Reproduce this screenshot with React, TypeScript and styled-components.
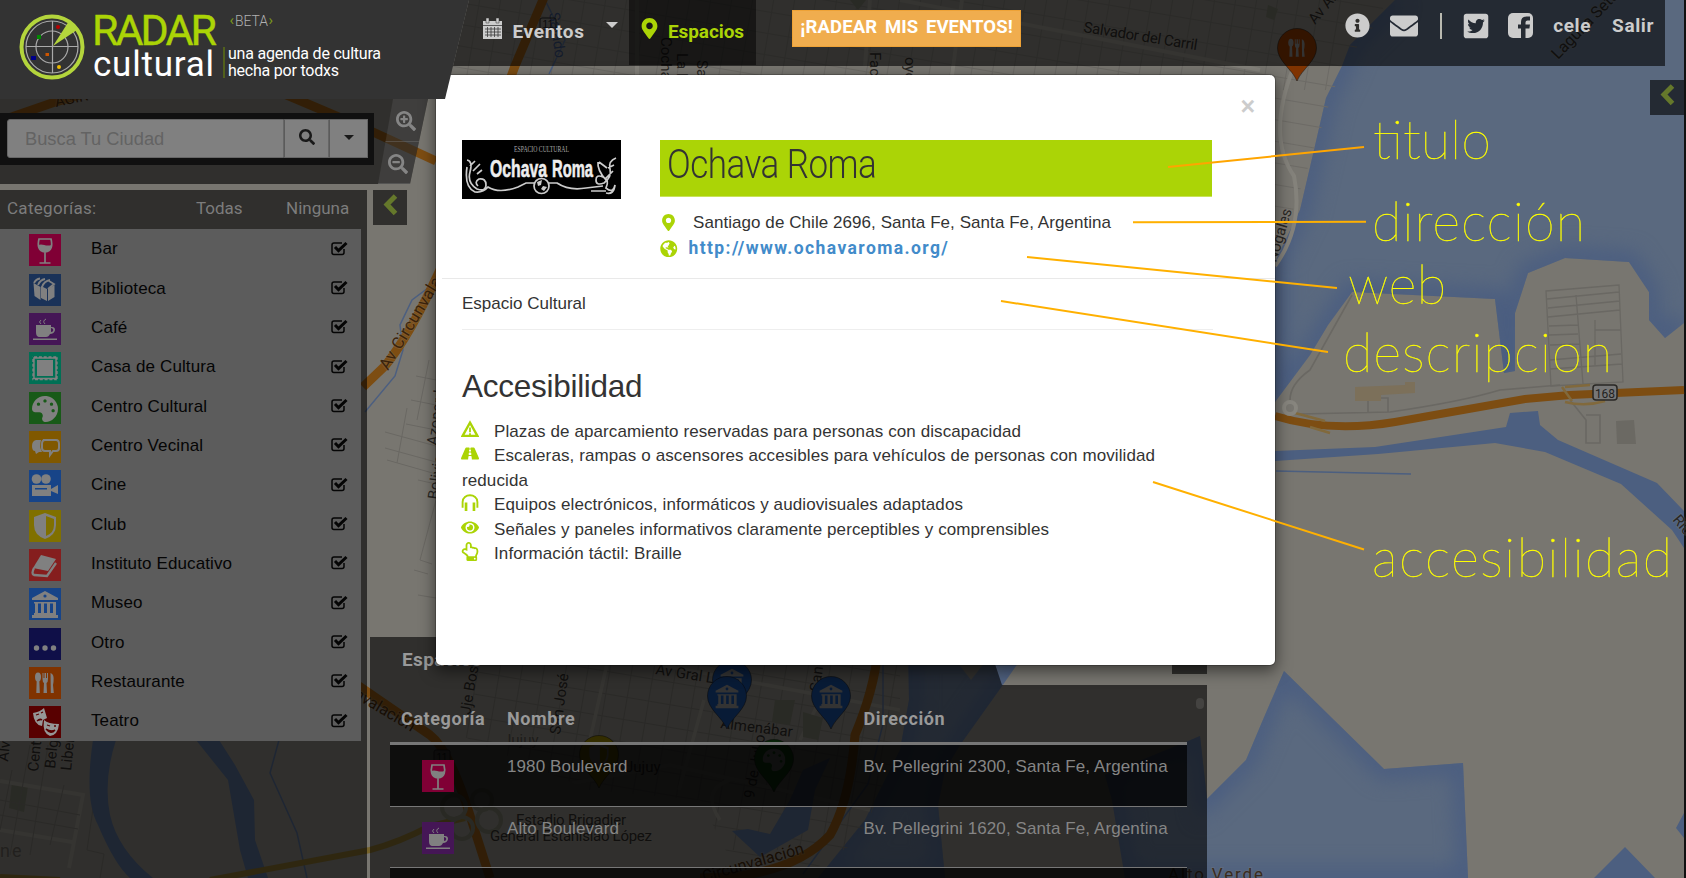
import React from "react";
import styled, { createGlobalStyle } from "styled-components";
import {
  FaInfoCircle, FaEnvelope, FaTwitterSquare, FaMapMarkerAlt, FaSearch, FaSearchPlus,
  FaSearchMinus, FaPalette, FaTheaterMasks, FaGlobeAmericas, FaRoad, FaEye, FaRegHandPointUp,
} from "react-icons/fa";

const LIME = "#abd406";
const SANS = '"Liberation Sans", Arial, sans-serif';
const TECH = 'Roboto, "Liberation Sans", sans-serif';
const SHADE = "rgba(0, 0, 0, 0.6)";

const Global = createGlobalStyle`
  * { box-sizing: border-box; }
  body { margin: 0; background: #151515; font-family: ${SANS}; }
`;

const Screen = styled.main`
  display: grid;
  grid-template: 878px / 1686px;
  width: 1686px;
  height: 878px;
  overflow: hidden;
  font-size: 17px;
  & > * { grid-area: 1 / 1; }
`;

const Layer = styled.svg`
  display: block;
  width: 1686px;
  height: 878px;
`;

const NoteLayer = styled(Layer)`
  position: relative;
  z-index: 6;
  pointer-events: none;
`;

/* ---------- top bar ---------- */

const TopBar = styled.header`
  display: flex;
  justify-content: space-between;
  width: 1220px;
  height: 66px;
  margin-left: 445px;
  background: ${SHADE};
  clip-path: polygon(24px 0, 100% 0, 100% 100%, 8px 100%);
  font-family: ${TECH};
`;

const NavGroup = styled.nav`
  display: flex;
  align-items: flex-start;
`;

const NavItem = styled.a<{ $active?: boolean; $width: number; $pad: number; $gap: number; $spacing: number }>`
  display: flex;
  flex: none;
  gap: ${(p) => p.$gap}px;
  width: ${(p) => p.$width}px;
  height: 65px;
  padding: 18px 0 0 ${(p) => p.$pad}px;
  background: ${(p) => (p.$active ? "rgba(0,0,0,.5)" : "transparent")};
  color: ${(p) => (p.$active ? LIME : "#ccc")};
  font-size: 19px;
  font-weight: 700;
  line-height: 27px;
  letter-spacing: ${(p) => p.$spacing}px;
  svg { flex: none; }
`;

const Caret = styled.span<{ $size: number; $color: string }>`
  flex: none;
  width: 0;
  height: 0;
  border: ${(p) => p.$size}px solid transparent;
  border-top-color: ${(p) => p.$color};
  border-bottom: 0;
`;

const NavCaret = styled(Caret)`
  margin: 4px 0 0 12px;
`;

const PublishButton = styled.button`
  width: 229px;
  height: 37px;
  margin: 10px 0 0 36px;
  padding: 0 0 3px;
  border: 1px solid #eea236;
  background: #f0ad4e;
  color: #fff;
  font: 700 18.5px/26px ${TECH};
  letter-spacing: 0.1px;
  word-spacing: 3px;
  white-space: nowrap;
`;

const Tools = styled.div`
  display: flex;
  align-items: center;
  height: 51px;
  margin-right: 11px;
  color: #ccc;
  font-size: 19px;
  font-weight: 700;
  letter-spacing: 0.6px;
`;

const Spacer = styled.i<{ $w: number }>`
  width: ${(p) => p.$w}px;
`;

const Bar = styled.i`
  width: 2px;
  height: 26px;
  background: #b9b9b0;
`;

/* ---------- left column ---------- */

const LeftColumn = styled.aside`
  display: flex;
  flex-direction: column;
  width: 469px;
  height: 878px;
`;

const Brand = styled.div`
  position: relative;
  z-index: 5;
  flex: none;
  height: 99px;
  background: #333;
  clip-path: polygon(0 0, 100% 0, 445px 100%, 0 100%);
`;

const SearchArea = styled.div`
  display: flex;
  flex: none;
  justify-content: space-between;
  width: 428px;
  height: 85px;
  margin-bottom: 6px;
  background: ${SHADE};
  clip-path: polygon(0 0, 100% 0, 410px 100%, 0 100%);
`;

const SearchBox = styled.div`
  display: flex;
  width: 374px;
  height: 52px;
  margin-top: 14px;
  padding: 6px 6px 7px 7px;
  background: #101010;
`;

const SearchField = styled.div`
  width: 277px;
  padding: 0 17px;
  border: 1px solid #666;
  border-radius: 3px 0 0 3px;
  background: #808080;
  color: #636363;
  font-size: 18.3px;
  line-height: 38px;
`;

const SearchButton = styled.div<{ $w: number }>`
  display: flex;
  align-items: center;
  justify-content: center;
  width: ${(p) => p.$w}px;
  padding-bottom: 3px;
  border: 1px solid #666;
  border-left-color: #5b5b5b;
  background: #808080;
  color: #191919;
`;

const ZoomControl = styled.div`
  display: flex;
  flex-direction: column;
  width: 50px;
  height: 85px;
  background: rgba(125, 125, 125, 0.2);
  clip-path: polygon(15px 0, 100% 0, 32px 100%, 0 100%);
  color: #858585;
`;

const ZoomStep = styled.div<{ $shift: number }>`
  height: 43px;
  padding: 12px 0 0 ${(p) => p.$shift}px;
  border-bottom: 1px solid #77777766;
`;

const CategoryArea = styled.div`
  display: flex;
  flex: 1;
  gap: 6px;
  align-items: flex-start;
`;

const CategoryPanel = styled.section`
  width: 367px;
  height: 100%;
  background: ${SHADE};
`;

const CategoryHead = styled.div`
  display: flex;
  height: 39px;
  padding: 6px 0 0 7px;
  color: #7c7c7c;
  font: 400 17px/24px ${TECH};
  span:nth-child(1) { width: 189px; letter-spacing: 0.3px; }
  span:nth-child(2) { width: 90px; }
`;

const CategoryList = styled.ul`
  width: 361px;
  height: 512px;
  margin: 0;
  padding: 0;
  background: #5c5c5c;
  list-style: none;
`;

const CategoryRow = styled.li`
  display: flex;
  align-items: center;
  height: 39.35px;
  padding: 3px 13px 0 29px;
  color: #050505;
  letter-spacing: 0.12px;
`;

const CategoryName = styled.span`
  flex: 1;
  padding: 0 0 2px 30px;
`;

const Tile = styled.span<{ $bg: string }>`
  display: block;
  flex: none;
  width: 32px;
  height: 32px;
  background: ${(p) => p.$bg};
  svg { display: block; }
`;

const PanelToggle = styled.div`
  display: flex;
  justify-content: center;
  width: 34px;
  height: 35px;
  padding-top: 4px;
  background: ${SHADE};
`;

const RightToggle = styled(PanelToggle)`
  justify-self: end;
  margin: 80px 2px 0 0;
`;

/* ---------- results ---------- */

const Results = styled.section`
  align-self: end;
  display: flex;
  flex-direction: column;
  width: 837px;
  height: 241px;
  margin-left: 370px;
`;

const ResultsTop = styled.div`
  display: flex;
  justify-content: space-between;
  flex: none;
  height: 48px;
`;

const ResultsTab = styled.div`
  width: 632px;
  padding: 12px 32px;
  background: ${SHADE};
  clip-path: polygon(0 0, 616px 0, 100% 100%, 0 100%);
  color: #999;
  font: 700 19px/22px ${TECH};
  letter-spacing: 0.4px;
`;

const Collapse = styled.div`
  width: 35px;
  height: 37px;
  background: ${SHADE};
`;

const ResultsBody = styled.div`
  display: flex;
  flex: 1;
  gap: 9px;
  padding: 0 0 0 20px;
  background: ${SHADE};
  overflow: hidden;
`;

const ScrollThumb = styled.i`
  width: 8px;
  height: 11px;
  margin-top: 13px;
  border-radius: 4px;
  background: #444341;
`;

const Table = styled.div`
  width: 797px;
`;

const TableHead = styled.div`
  display: grid;
  grid-template-columns: 106px 356.5px 1fr;
  height: 60px;
  padding: 22px 0 0 11px;
  border-bottom: 3px solid #777;
  color: #999;
  font: 700 18px/24px ${TECH};
  letter-spacing: 0.6px;
`;

const TableRow = styled.div<{ $dark?: boolean }>`
  display: grid;
  grid-template-columns: 85px 356.5px 1fr;
  height: 61.5px;
  padding: 15px 0 0 32px;
  border-bottom: 1.5px solid #777;
  background: ${(p) => (p.$dark ? "rgba(0,0,0,.7)" : "transparent")};
  color: #858585;
  line-height: 20px;
  letter-spacing: 0.1px;
  span + span { margin-top: -3px; }
`;

/* ---------- dialog ---------- */

const Dialog = styled.section`
  position: relative;
  z-index: 4;
  display: flex;
  flex-direction: column;
  width: 841px;
  height: 592px;
  margin: 74px 0 0 435px;
  border: 1px solid rgba(0, 0, 0, 0.2);
  border-radius: 6px;
  background: #fff;
  background-clip: padding-box;
  box-shadow: 0 5px 15px rgba(0, 0, 0, 0.5);
  color: #333;
`;

const CloseRow = styled.div`
  flex: none;
  height: 65px;
  padding: 17px 20px 0;
  color: #ccc;
  font: 700 25px/28px ${SANS};
  text-align: right;
`;

const DialogHead = styled.div`
  display: flex;
  flex: none;
  gap: 39px;
  height: 139px;
  margin-left: 6px;
  padding: 0 62px 0 20px;
  border-bottom: 1px solid #e9e9e9;
`;

const PlaceInfo = styled.div`
  width: 552px;
`;

const PlaceTitle = styled.h1`
  height: 57px;
  margin: 0 0 13px;
  padding: 0 7px;
  background: ${LIME};
  border-bottom: 1px solid #c8e25a;
  color: #333;
  font: 300 40px/49px ${TECH};
  letter-spacing: -0.6px;
  span { display: inline-block; transform: scaleX(0.875); transform-origin: left; }
`;

const InfoLine = styled.div<{ $gap: number }>`
  display: flex;
  align-items: center;
  gap: ${(p) => p.$gap}px;
  height: 25.5px;
  letter-spacing: 0.06px;
  svg { flex: none; color: ${LIME}; }
`;

const SiteLink = styled.a`
  color: #428bca;
  font: 700 17.5px/22px ${TECH};
  letter-spacing: 1.4px;
`;

const Description = styled.p`
  flex: none;
  height: 51px;
  margin: 0 62px 0 26px;
  padding: 15px 0 0;
  border-bottom: 1px solid #eee;
  line-height: 20px;
`;

const AccessTitle = styled.h2`
  margin: 34px 26px 12px;
  font: 400 31.5px/44px ${SANS};
  letter-spacing: -0.27px;
`;

const AccessList = styled.div`
  width: 760px;
  margin-left: 26px;
  line-height: 24.4px;
  letter-spacing: 0.1px;
`;

const AccessItem = styled.div`
  padding-right: 40px;
  svg { width: 18px; height: 19px; margin: 0 15px 0 -1px; color: ${LIME}; vertical-align: -2px; }
`;

/* ---------- icons ---------- */

const FG = "#808080";

const glyphs: Record<string, React.ReactNode> = {
  bar: <g fill="none" stroke={FG} strokeWidth="1.7"><path d="M10 5h12c1.5 6 1 12-6 13-7-1-7.500-7-6-13zM16 18v11M10.500 29h11" /><path d="M9.500 11c4-2 7 2 13 0 0 4-2 6.500-6.500 7-4-.5-6.500-3-6.500-7z" fill={FG} stroke="none" /></g>,
  books: <g fill={FG}><path d="M4.500 9l7 4v13l-6-4zM12 12l6 3v12l-6-3zM19 15l6.500-4v12l-6.500 4z" /><path d="M5 9q2-4 6-4.500M9 11q2-5 7-6M13 13q2-6 8-7M19 15l6-5-5-3" fill="none" stroke={FG} strokeWidth="1.800" /></g>,
  cafe: <g fill={FG}><path d="M7 12h15v2c6-1 5 7-1 7-1 2-2 3-4 3h-6c-3 0-4-2-4-5zm15 3v4c3 0 3-4 0-4zM4 25.500h24v1.500H4z" /><path d="M12 11q-3-2 0-4M16 11q-3-3 1-5" stroke={FG} fill="none" /></g>,
  stamp: <g><path d="M8 8h16v16H8z" fill={FG} /><path d="M4.500 5.500h23v21.500h-23z" fill="none" stroke={FG} strokeWidth="2.400" /><path d="M3.300 4.300h25.400v23.900H3.300z" fill="none" stroke="#007055" strokeWidth="1.800" strokeDasharray="1.800 3" /></g>,
  talk: <g><path d="M14 9h13q3 0 3 4v4q0 3-3 3h-3l-3 4v-4h-5q-3 0-3-3v-4q0-4 3-4z" fill="none" stroke={FG} strokeWidth="2" /><path d="M12 9H7q-4 1-4 6t3 5l1 3 3-2h3q-3-5-1-12z" fill={FG} /></g>,
  film: <g fill={FG}><circle cx="7.500" cy="9" r="4.800" /><circle cx="17" cy="9" r="4.800" /><path d="M3 15h19v4l7-4v9l-7-3v5H3z" /><path d="M6 18h12v1.500H6z" fill="#174488" /></g>,
  club: <g><path d="M16 3l11 4v8q0 10-11 14Q5 25 5 15V7z" fill={FG} /><path d="M17 6l8 3v6q0 8-8 11z" fill="#807000" /></g>,
  book: <g><path d="M12 6l15 4-8 12L4 19z" fill={FG} /><path d="M5 19q-3 6 0 7l13 1L27 14" fill="none" stroke={FG} strokeWidth="2.300" /></g>,
  museum: <g fill={FG}><path d="M16 3l13 7v2H3v-2zM5 14h22v1.500H5zM6 15h3v10H6zm6 0h3v10h-3zm6 0h3v10h-3zm6 0h3v10h-3zM5 25h22v2H5zM3 27h26v3H3z" /><circle cx="16" cy="8" r="1.600" fill="#174488" /></g>,
  more: <g fill={FG}><circle cx="7.500" cy="20" r="2.700" /><circle cx="16" cy="20" r="2.700" /><circle cx="24.500" cy="20" r="2.700" /></g>,
  food: <g fill={FG}><ellipse cx="9" cy="10" rx="3" ry="4.500" /><path d="M7.700 13h2.600l.5 13h-3.500zM13.500 6h1v5h1V6h1.500v5h1V6h1v6q0 3-1.500 4l.5 10h-3.500l.5-10q-1.500-1-1.500-4zM21.500 6q4 1 3 9l-.5 3 .8 8h-3z" /></g>,
  masks: <g fill="#969696"><path d="M4 7q7-1 11-5l3 10-4 2-1 6Q5 19 4 7z" /><path d="M15 14q4 4 15 4-1 11-9 12-8-3-6-16z" /><path d="M7 9l3-1M12 7l2-1M8 15q3-3 5-1M18 19l3 1M25 20l2 0M17 23q5 3 9 1-4 5-9-1z" fill="#580000" stroke="#580000" strokeWidth="1.300" /></g>,
};

const Glyph = ({ name, size = 32 }: { name: string; size?: number }) => (
  <svg width={size} height={size} viewBox="0 0 32 32">
    {name === "palette"
      ? <g transform="matrix(-1 0 0 1 32 0)"><FaPalette x={3} y={4} size={26} color={FG} /></g>
      : glyphs[name]}
  </svg>
);

const CheckMark = styled.svg`
  flex: none;
  margin-top: -4px;
`;

const Check = () => (
  <CheckMark width="17" height="15" viewBox="0 0 17 15">
    <path d="M13 8v3.500q0 2-2 2H3q-2 0-2-2V4q0-2 2-2h8" fill="none" stroke="#050505" strokeWidth="1.500" />
    <path d="M4 6l3.500 3.700 8-7.700" fill="none" stroke="#050505" strokeWidth="3" />
  </CheckMark>
);

const Calendar = () => (
  <svg width="21" height="22" viewBox="0 0 21 22">
    <path d="M1 3h19v18H1z" fill="#ccc" />
    <path d="M4 0h3v5H4zM14 0h3v5h-3z" fill="#ccc" stroke="#333" strokeWidth=".5" />
    <path d="M1 7.500h19M3 11h16M3 14h16M3 17h16M5.500 9v10M9 9v10M12.500 9v10M16 9v10" stroke="#3b3b3b" strokeWidth=".8" />
  </svg>
);

const Facebook = () => (
  <svg width="25" height="25" viewBox="0 0 25 25">
    <rect width="25" height="25" rx="5" fill="#ccc" />
    <path d="M13 25v-9.500h-3v-4h3V9q0-5.500 5.500-5.500H22v4h-2.500q-2 0-2 2v2H22l-.6 4h-3.900V25z" fill="#262b33" />
  </svg>
);

const Arrow = () => (
  <svg width="17" height="22" viewBox="0 0 17 22">
    <path d="M13.500 2L5 10.500l8.500 9" fill="none" stroke="#65782b" strokeWidth="5" />
  </svg>
);

const Warning = () => (
  <svg viewBox="0 0 17 18"><path d="M8.500 2.500l7 12.500h-14z" fill="none" stroke="currentColor" strokeWidth="2.200" /><path d="M8.500 7v4.500m0 1v2" stroke="currentColor" strokeWidth="1.700" /></svg>
);

const Headphones = () => (
  <svg viewBox="0 0 17 18"><path d="M1.500 14V8.500C1.500 0 15.500 0 15.500 8.500V14" fill="none" stroke="currentColor" strokeWidth="1.800" /><path d="M3.500 9h2.500v8H3.500zM11 9h2.500v8H11z" fill="currentColor" /></svg>
);

const BrandMark = () => (
  <svg width="445" height="99" viewBox="0 0 445 99">
    <circle cx="52" cy="47" r="30.500" fill="#333" stroke="#b4d53c" strokeWidth="4" />
    <g fill="none" stroke="#aaa">
      <circle cx="52" cy="47" r="26" strokeWidth="1.200" />
      <circle cx="52" cy="47" r="16" strokeWidth="1.200" />
      <path d="M26 46.500h52M52.500 21v52" strokeWidth="1.200" />
    </g>
    <path d="M53 46L69 21q5 3 8 9z" fill="#b4d53c" />
    <circle cx="58" cy="27" r="2" fill="#b00" />
    <rect x="37" y="35" width="4" height="4" fill="#080" />
    <rect x="45.500" y="53" width="3.500" height="3" fill="#c50" />
    <rect x="31" y="56" width="5" height="4" fill="#008" />
    <circle cx="59" cy="67" r="2" fill="#eb0" />
    <g fontFamily="Roboto, sans-serif" fill="#fff">
      <text x="92" y="45" fontSize="43" fill={LIME} stroke={LIME} strokeWidth=".4" textLength="125" lengthAdjust="spacing">RADAR</text>
      <text x="93" y="75.500" fontSize="35" textLength="121" lengthAdjust="spacing">cultural</text>
      <text x="228" y="58.500" fontSize="16" textLength="153" lengthAdjust="spacing">una agenda de cultura</text>
      <text x="228" y="75.500" fontSize="16" textLength="111" lengthAdjust="spacing">hecha por todxs</text>
      <text x="235" y="25.500" fontSize="15.500" fontWeight="300" fill="#b0b0b0" textLength="33" lengthAdjust="spacingAndGlyphs">BETA</text>
      <text x="229.500" y="25" fontSize="15" fill="#7c9a1a">‹</text>
      <text x="268.500" y="25" fontSize="15" fill="#7c9a1a">›</text>
    </g>
    <path d="M224 47v31" stroke="#5d7016" strokeWidth="1.500" />
  </svg>
);

const VenueLogo = () => (
  <svg width="159" height="59" viewBox="0 0 159 59">
    <path d="M0 0h159v59H0z" fill="#000" />
    <text x="52" y="11.500" fill="#aaa" fontFamily="Liberation Serif, serif" fontSize="7.500" textLength="55" lengthAdjust="spacingAndGlyphs">ESPACIO CULTURAL</text>
    <g fill="#eee" stroke="#eee" strokeWidth=".6" fontFamily="Liberation Sans, sans-serif" fontWeight="700" fontSize="24">
      <text x="28" y="37" textLength="57" lengthAdjust="spacingAndGlyphs">Ochava</text>
      <text x="90" y="37" textLength="41" lengthAdjust="spacingAndGlyphs">Roma</text>
    </g>
    <g fill="none" stroke="#ccc" strokeWidth="1.700">
      <path d="M5 20q6 1 3 12t7 17q9 3 9-4t-7-6q-5 3-1 7M5 27q-3 20 8 25 8 1 13-5 11 7 30 0l8-4h8M87 43h8q12 8 29 5l17-2M8 26l5-5M15 34l5-4M11 31l7-7" />
      <path d="M154 18q-8 3-6 11t-6 14q-8 3-8-3t7-3 3 11q7 6 9-3-1 10-9 8M136 22q-1 8 8 18M145 28l-8-6M151 31l-7 7M152 25l-6 3M129 51h15" />
      <circle cx="79.500" cy="46" r="7.500" />
    </g>
    <path d="M75 42l5-2-1 5-3 1zM81 46l4 1-3 4-3-2z" fill="#ccc" />
  </svg>
);

/* ---------- map ---------- */

const LAKE = "M1395 0H1684V323L1665 338 1649 320V292L1629 262 1565 258 1528 273 1515 313V371L1504 373 1495 299 1352 292 1328 325 1310 355 1275 402V262L1283 245 1300 210 1314 150 1326 98 1342 66 1350 45Z";
const LAGOON = "M1284 671L1384 769 1463 763 1468 878H1125L1112 800 1105 775 1186 742 1200 736 1207 799 1246 760 1262 722Z";
const RIVER = "M908 640H1034L1002 686 960 745 945 770 938 805 945 878H818L865 820 900 750 909 700Z";

const Pin = ({ x, y, color, glyph }: { x: number; y: number; color: string; glyph: string }) => (
  <g transform={`translate(${x} ${y})`}>
    <path d="M0 32C-5 20-19.500 12-19.500-1a19.500 19.500 0 0 1 39 0C19.500 12 5 20 0 32Z" fill={color} stroke="#111" strokeOpacity=".5" />
    <g transform="translate(-14 -15)"><Glyph name={glyph} size={28} /></g>
  </g>
);

const streets = (x: number, y: number, w: number, h: number, step: number) => {
  let d = "";
  for (let i = 0; i <= w; i += step) d += `M${x + i} ${y}l${-h * 0.17} ${h}`;
  for (let j = 0; j <= h; j += step) d += `M${x - j * 0.17} ${y + j}l${w} ${w * 0.17}`;
  return d;
};

const CityMap = () => (
  <Layer viewBox="0 0 1686 878">
    <defs>
      <filter id="soft" x="-20%" y="-20%" width="140%" height="140%" colorInterpolationFilters="sRGB"><feGaussianBlur stdDeviation="10" /></filter>
      <clipPath id="waters"><path d={LAKE} /><path d={LAGOON} /><path d={RIVER} /></clipPath>
      <clipPath id="town"><path d="M452 0H1395L1342 66 1314 150 1275 262V640H436V66Z" /></clipPath>
      <clipPath id="south"><path d="M385 650L500 637H900V745L860 840 800 878H740L700 800 590 790 470 740 405 700Z" /></clipPath>
    </defs>
    <path d="M0 0h1686v878H0z" fill="#787670" />
    <g fill="#5a697f"><path d={LAKE} /><path d={LAGOON} /><path d={RIVER} /></g>
    <g clipPath="url(#waters)">
      <g fill="none" stroke="#4a5d80" strokeWidth="20" filter="url(#soft)">
        <path d={LAKE.replace("M1395 0H1684V323", "M1395 0L1350 45M1684 323").replace("Z", "L1395 0")} /><path d={LAGOON} /><path d={RIVER} />
      </g>
    </g>
    <path d="M1684 0h2v878h-2z" fill="#111" />
    <path d="M957 662l14 18 14-18z" fill="#787670" />
    <g fill="none" stroke="#6d6b66" clipPath="url(#town)"><path d={streets(470, -190, 920, 280, 21)} /></g>
    <g fill="none" stroke="#84827b" strokeWidth="4">
      <path d="M870 0l-5 66M962 0l-10 75M900 0l360 70M637 0v75M1294 66q-28 70 0 110 10 50-19 90" />
    </g>
    <g fill="none" stroke="#6a6863" clipPath="url(#south)"><path d={streets(500, 540, 420, 310, 22)} /></g>
    <g fill="none" stroke="#85837b" strokeWidth="3.500" clipPath="url(#south)">
      <path d="M607 664l-18 80M580 650l320 60M510 795l160-30 200 45M704 700l-25 90M800 740l30-60M720 820q-20-30 10-40M470 810l30 68" />
    </g>
    <g fill="none" stroke="#6a6863">
      <path d="M429 360l-12 60M436 380l-20-4M436 405l-25-5M436 430l-30-6M385 432l51 14M385 448l51 14M387 460l49 14M407 408l-10 55M418 480l18 4M436 500l-16 60 12 4M414 570l14 4M418 595l18 3" />
      <path d="M1546 291l73-6 4 97-72 4zM1547 299l72-7M1548 308l72-7M1548 317l72-7M1549 326l29-1M1549 335l29-1M1550 345l30-1M1550 360l71-6M1550 369l72-5M1576 295l7 89M1595 320v45M1595 330h26" strokeWidth="1.300" />
      <path d="M1290 400q0-16 20-30l42-75M1300 414l90-2q70-10 110-22l60-5M1368 412v-14h20v14M1570 400l16 20v23h14v-28h-14" strokeWidth="1.600" />
    </g>
    <path d="M1616 421l18-1 2 24h-19z" fill="#6b6963" />
    <path d="M1355 387l50-2v-3h10v11l-34 2v6h-26z" fill="#7c705a" />
    <g fill="#686a5c"><path d="M12 782l16 4-4 26-15-4zM775 700h20l-5 25-18-3zM803 712l20 6-5 22-15-3zM1268 5l10 4-4 11-8-3zM850 0h16l-8 10z" /></g>
    <g fill="none" stroke="#84827b" strokeWidth="4">
      <path d="M0 781l83 14-14 73M0 830l72 12" />
    </g>
    <g fill="none" stroke="#6a6863"><path d="M12 770l-12 60M30 745l-20 110M48 745l-18 110M64 785l-14 60M0 800l80 15M0 815l78 14M95 795l-8 55 17 4-4 24" /></g>
    <g fill="#4c5f80">
      <path d="M93 740Q84 800 98 825 115 865 130 878H153Q118 850 110 815 103 780 116 740ZM196 740L228 780 240 850 248 878H268L255 840 254 800 235 765 219 740Z" />
      <path d="M1275 451L1375 447 1480 431 1506 427 1510 413 1538 411 1540 425 1558 440 1657 483 1684 511V548L1672 530 1621 484 1545 452 1495 443 1378 454 1275 461ZM1594 878L1625 847 1655 878ZM1684 813L1676 828 1684 838ZM732 831L748 829 770 834 790 800 803 770 830 758 815 790 808 830 760 857Z" />
    </g>
    <g fill="none" stroke="#4c5f80" strokeWidth="1.500">
      <path d="M279 740L270 773 297 833 307 878M1276 471L1411 474M365 412L395 376 403 350 400 325 412 300 436 282M883 664v60l-15 60-65 90M545 0l20 40-16 34" />
    </g>
    <g fill="none" stroke="#7d4d12" strokeWidth="9">
      <path d="M0 121L52 103 90 92M275 90L360 126 436 161M545-5L515 66 508 85M363 387L385 366Q410 335 440 270M350 680L430 735Q447 748 465 800L490 878M878 650Q874 690 855 735 850 800 830 835 790 878 700 878" />
      <path d="M1275 416Q1330 433 1395 422L1525 399 1570 395 1684 390" strokeWidth="8" />
    </g>
    <g fill="none" stroke="#75622a" strokeWidth="6">
      <path d="M210 880L370 850Q400 842 430 826L465 818M0 877l60 3" />
      <path d="M1295 413l30 8M1310 427l20 6M1562 387l10 14M1565 402q20 5 40-1M1565 387l25-2" strokeWidth="2.500" stroke="#81693c" />
    </g>
    <g fill="none" stroke="#66685a" strokeWidth="4"><circle cx="454" cy="807" r="12" /><circle cx="482" cy="800" r="10" /><circle cx="462" cy="828" r="11" /><circle cx="489" cy="820" r="12" /><circle cx="1290" cy="408" r="6" stroke="#87857e" /></g>
    <g fontFamily="Roboto, sans-serif" fontSize="15" fill="#292724" stroke="#858078" strokeOpacity=".25" strokeWidth="2" paintOrder="stroke">
      <text transform="translate(388 371) rotate(-59)" fill="#3a230b" fontSize="16.500" textLength="138">Av Circunvalación</text>
      <text transform="translate(353 697) rotate(31)" fill="#3a230b" fontSize="16">nvalación</text>
      <text transform="translate(704 882) rotate(-16)" fill="#3a230b" fontSize="16">Circunvalación</text>
      <text transform="translate(549 13) rotate(82)" fill="#33466d">Salado</text>
      <text transform="translate(1083 32) rotate(9)" textLength="115">Salvador del Carril</text>
      <text transform="translate(1315 25) rotate(-50)">Av Alte Brown</text>
      <text transform="translate(1558 60) rotate(-46)" fontSize="16">Laguna Setúbal</text>
      <text transform="translate(1276 263) rotate(-73)">Nogales</text>
      <text transform="translate(437 446) rotate(-82)">Azopardo</text>
      <text transform="translate(438 500) rotate(-82)">Bolivia</text>
      <text transform="translate(470 715) rotate(-80)">Jje Bosso</text>
      <text transform="translate(560 735) rotate(-82)">San José</text>
      <text transform="translate(655 674) rotate(9)">Av Gral López</text>
      <text transform="translate(820 692) rotate(-83)">San Luis</text>
      <text transform="translate(720 728) rotate(7)">Almenábar</text>
      <text transform="translate(754 799) rotate(-80)">9 de Julio</text>
      <text x="503" y="745" fill="#4b4843">Jujuy</text>
      <text x="625" y="772">Jujuy</text>
      <text x="516" y="825" textLength="110">Estadio Brigadier</text>
      <text x="490" y="841" textLength="162">General Estanislao López</text>
      <text transform="translate(38 772) rotate(-84)">Centenario</text>
      <text transform="translate(55 769) rotate(-84)">Belgrano</text>
      <text transform="translate(71 771) rotate(-84)">Liber</text>
      <text transform="translate(8 762) rotate(-84)">Alva</text>
      <text x="0" y="857" fontSize="18" fill="#55524c" letterSpacing="2">ne</text>
      <text x="1168" y="880" fontSize="17" fill="#3a2b1c" textLength="95">Alto Verde</text>
      <text transform="translate(1672 520) rotate(50)">Río</text>
      <text transform="translate(56 107) rotate(-12)" fill="#3a230b">AGIR</text>
      <text transform="translate(661 37) rotate(90)">Cochabamba</text>
      <text transform="translate(677 53) rotate(90)">La Paz</text>
      <text transform="translate(697 60) rotate(90)">Santa</text>
      <text transform="translate(870 52) rotate(90)">Facundo</text>
      <text transform="translate(905 57) rotate(90)">oyola</text>
    </g>
    <rect x="1593" y="385" width="24" height="15" rx="3" fill="#777" stroke="#292724" strokeWidth="1.500" />
    <text x="1605" y="397.500" fontSize="12" fontFamily="Roboto, sans-serif" textAnchor="middle" fill="#222">168</text>
    <rect x="434" y="750" width="16" height="13" rx="2" fill="#65635e" stroke="#333" />
    <text x="442" y="761" fontSize="11" textAnchor="middle" fill="#222">11</text>
    <rect x="540" y="18" width="16" height="12" rx="2" fill="none" stroke="#222" />
    <text x="548" y="28" fontSize="11" textAnchor="middle" fill="#222">11</text>
    <Pin x={1297} y={49} color="#803300" glyph="food" />
    <Pin x={732} y={681} color="#164488" glyph="museum" />
    <Pin x={727} y={697} color="#164488" glyph="museum" />
    <Pin x={831} y={697} color="#164488" glyph="museum" />
    <Pin x={599} y={756} color="#807000" glyph="club" />
    <Pin x={774} y={760} color="#185a18" glyph="palette" />
  </Layer>
);

/* ---------- data ---------- */

const categories = [
  ["Bar", "bar", "#800035"], ["Biblioteca", "books", "#1a3258"], ["Café", "cafe", "#451656"],
  ["Casa de Cultura", "stamp", "#007055"], ["Centro Cultural", "palette", "#185a18"], ["Centro Vecinal", "talk", "#805800"],
  ["Cine", "film", "#174488"], ["Club", "club", "#807000"], ["Instituto Educativo", "book", "#851e1e"],
  ["Museo", "museum", "#174488"], ["Otro", "more", "#0f0f48"], ["Restaurante", "food", "#803300"], ["Teatro", "masks", "#580000"],
];

const access: [React.ReactNode, string][] = [
  [<Warning />, "Plazas de aparcamiento reservadas para personas con discapacidad"],
  [<FaRoad />, "Escaleras, rampas o ascensores accesibles para vehículos de personas con movilidad reducida"],
  [<Headphones />, "Equipos electrónicos, informáticos y audiovisuales adaptados"],
  [<FaEye />, "Señales y paneles informativos claramente perceptibles y comprensibles"],
  [<FaRegHandPointUp />, "Información táctil: Braille"],
];

const notes: [string, number, number, number][] = [
  ["titulo", 1373, 159, 118], ["dirección", 1372, 241, 213], ["web", 1348, 304, 98],
  ["descripcion", 1343, 372, 269], ["accesibilidad", 1372, 577, 300],
];

export default function App() {
  return (
    <>
      <Global />
      <Screen>
        <CityMap />
        <TopBar>
          <NavGroup>
            <NavItem $width={184} $pad={37} $gap={9.5} $spacing={0.65}>
              <Calendar />Eventos<NavCaret $size={6.5} $color="#ccc" />
            </NavItem>
            <NavItem $active $width={127} $pad={10} $gap={8} $spacing={-0.1}>
              <FaMapMarkerAlt size={21} />Espacios
            </NavItem>
            <PublishButton>¡RADEAR MIS EVENTOS!</PublishButton>
          </NavGroup>
          <Tools>
            <FaInfoCircle size={25} /><Spacer $w={20} /><FaEnvelope size={28} /><Spacer $w={22} /><Bar />
            <Spacer $w={20} /><FaTwitterSquare size={28} /><Spacer $w={18} /><Facebook />
            <Spacer $w={20} />cele<Spacer $w={21} />Salir
          </Tools>
        </TopBar>
        <LeftColumn>
          <Brand><BrandMark /></Brand>
          <SearchArea>
            <SearchBox>
              <SearchField>Busca Tu Ciudad</SearchField>
              <SearchButton $w={45}><FaSearch size={16} /></SearchButton>
              <SearchButton $w={39}><Caret $size={5} $color="#191919" /></SearchButton>
            </SearchBox>
            <ZoomControl>
              <ZoomStep $shift={18}><FaSearchPlus size={20} /></ZoomStep>
              <ZoomStep $shift={10}><FaSearchMinus size={20} /></ZoomStep>
            </ZoomControl>
          </SearchArea>
          <CategoryArea>
            <CategoryPanel>
              <CategoryHead><span>Categorías:</span><span>Todas</span><span>Ninguna</span></CategoryHead>
              <CategoryList>
                {categories.map(([name, icon, color]) => (
                  <CategoryRow key={name}>
                    <Tile $bg={color}><Glyph name={icon} /></Tile>
                    <CategoryName>{name}</CategoryName>
                    <Check />
                  </CategoryRow>
                ))}
              </CategoryList>
            </CategoryPanel>
            <PanelToggle><Arrow /></PanelToggle>
          </CategoryArea>
        </LeftColumn>
        <RightToggle><Arrow /></RightToggle>
        <Results>
          <ResultsTop><ResultsTab>Espacios</ResultsTab><Collapse /></ResultsTop>
          <ResultsBody>
            <Table>
              <TableHead><span>Categoría</span><span>Nombre</span><span>Dirección</span></TableHead>
              <TableRow $dark><Tile $bg="#800035"><Glyph name="bar" /></Tile><span>1980 Boulevard</span><span>Bv. Pellegrini 2300, Santa Fe, Argentina</span></TableRow>
              <TableRow><Tile $bg="#451656"><Glyph name="cafe" /></Tile><span>Alto Boulevard</span><span>Bv. Pellegrini 1620, Santa Fe, Argentina</span></TableRow>
              <TableRow $dark />
            </Table>
            <ScrollThumb />
          </ResultsBody>
        </Results>
        <Dialog>
          <CloseRow>×</CloseRow>
          <DialogHead>
            <VenueLogo />
            <PlaceInfo>
              <PlaceTitle><span>Ochava Roma</span></PlaceTitle>
              <InfoLine $gap={16}><FaMapMarkerAlt size={17} />Santiago de Chile 2696, Santa Fe, Santa Fe, Argentina</InfoLine>
              <InfoLine $gap={11}><FaGlobeAmericas size={17.500} /><SiteLink>http://www.ochavaroma.org/</SiteLink></InfoLine>
            </PlaceInfo>
          </DialogHead>
          <Description>Espacio Cultural</Description>
          <AccessTitle>Accesibilidad</AccessTitle>
          <AccessList>
            {access.map(([icon, text]) => <AccessItem key={text}>{icon}{text}</AccessItem>)}
          </AccessList>
        </Dialog>
        <NoteLayer viewBox="0 0 1686 878">
          <path d="M1168 167L1364 147" stroke="#ffa500" strokeWidth="2" />
          <path d="M1133 222.200L1366 221.800M1027 257L1337 288M1001 301L1328 352M1153 482L1364 549.500" fill="none" stroke="#ffb000" strokeWidth="2" />
          <g fill="#ff0" stroke="#ff0" strokeWidth=".35" fontFamily="Lato, sans-serif" fontWeight="100" fontSize="54">
            {notes.map(([t, x, y, w]) => <text key={t} x={x} y={y} textLength={w}>{t}</text>)}
          </g>
        </NoteLayer>
      </Screen>
    </>
  );
}
